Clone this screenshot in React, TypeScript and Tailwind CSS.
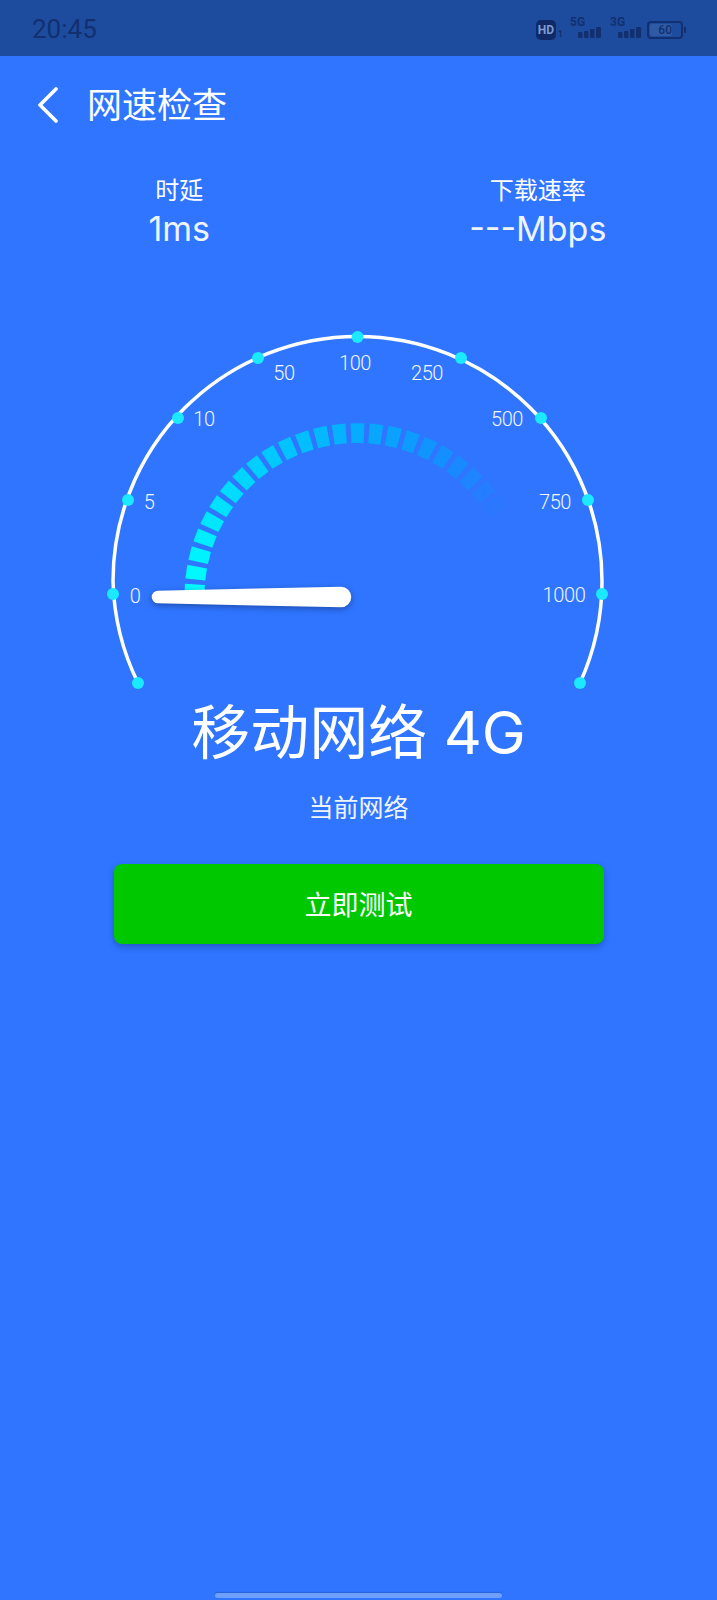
const FONT = "font-['Inter','Noto_Sans_CJK_SC',sans-serif]";

const DOTS = [
  [138, 683], [113, 594], [128, 500], [178, 418], [258, 358], [357.5, 337],
  [461, 358], [541, 418], [588, 500], [602, 594], [580, 683],
];

const LABELS: [string, number, number][] = [
  ["0", 135, 596], ["5", 149, 502], ["10", 204, 419], ["50", 284, 373], ["100", 355, 363],
  ["250", 427, 373], ["500", 507, 419], ["750", 555, 502], ["1000", 564, 595],
];

// segments start at the left end of the arc and fade out towards the right
function tickColor(angle: number) {
  const t = Math.min(1, angle / 150);
  const g = Math.round(255 - (255 - 117) * t);
  const r = Math.round(47 * Math.pow(t, 4));
  return `rgb(${r},${g},255)`;
}

function Gauge() {
  const cx = 357.5;
  const cy = 596;
  const ticks = [];
  for (let k = -14; k <= 9; k++) {
    const deg = 90 + k * 6.3;
    const rad = (deg * Math.PI) / 180;
    const half = 0.04;
    const pts = [
      [153, rad - half], [173, rad - half], [173, rad + half], [153, rad + half],
    ].map(([r, a]) => `${cx - r * Math.cos(a)},${cy - r * Math.sin(a)}`);
    ticks.push({ pts: pts.join(" "), color: tickColor(deg) });
  }
  return (
    <svg className="block w-full h-[400px]" viewBox="0 320 717 400" fill="none">
      {ticks.map((t, i) => (
        <polygon key={i} points={t.pts} fill={t.color} />
      ))}
      <path
        d="M138 683 A245 245 0 0 1 113 581 A244.5 244.5 0 0 1 602 581 A245 245 0 0 1 580 683"
        stroke="#ffffff"
        strokeWidth={3.5}
        strokeLinecap="round"
      />
      {DOTS.map(([x, y], i) => (
        <circle key={i} cx={x} cy={y} r={6} fill="#1be9ff" />
      ))}
      {LABELS.map(([s, x, y]) => (
        <text
          key={s}
          x={x}
          y={y + 7}
          textAnchor="middle"
          fontSize={20}
          fontWeight={300}
          letterSpacing={-0.4}
          fill="#f2f6ff"
          fontFamily="'Roboto', sans-serif"
        >
          {s}
        </text>
      ))}
      <path
        className="drop-shadow-[0_2px_3px_rgba(20,50,120,0.6)]"
        d="M158 590.7 L341 586.7 A10.3 10.3 0 0 1 341 607.3 L158 603.3 A6.3 6.3 0 0 1 158 590.7 Z"
        fill="#ffffff"
      />
    </svg>
  );
}

function Signal({ label }: { label: string }) {
  return (
    <svg width={32} height={24} viewBox="0 0 32 24" className="block -mt-[5px]">
      <text x={0} y={10} fontSize={12} fontWeight={700} fill="#12306f" fontFamily="'Roboto', sans-serif">
        {label}
      </text>
      <rect x={8} y={16} width={4.5} height={6} rx={1} fill="#12306f" />
      <rect x={14} y={15} width={4.5} height={7} rx={1} fill="#12306f" />
      <rect x={20} y={13} width={4.5} height={9} rx={1} fill="#12306f" />
      <rect x={26} y={11} width={5} height={11} rx={1} fill="#12306f" />
    </svg>
  );
}

export default function App() {
  return (
    <div className={`${FONT} w-[717px] min-h-[1600px] flex flex-col bg-[#2f75ff] text-white`}>
      <div className="h-14 shrink-0 bg-[#1d4c9f] flex items-center justify-between pl-8 pr-[31px]">
        <span className="font-['Roboto',sans-serif] text-[26px] text-[#12306f] pt-[3px]">20:45</span>
        <div className="flex items-center text-[#12306f] pt-1">
          <div className="w-5 h-5 rounded-[5px] bg-[#0f2a66] text-[#7f9bd0] text-[12px] font-bold leading-5 text-center font-['Roboto',sans-serif]">
            HD
          </div>
          <span className="font-['Roboto',sans-serif] text-[9px] font-bold self-end mb-[-1px] ml-[2px] mr-[7px]">1</span>
          <Signal label="5G" />
          <div className="w-[8px]" />
          <Signal label="3G" />
          <div className="ml-[5px] w-9 h-[18px] rounded-[4px] border-2 border-[#12306f] p-[1px]">
            <div className="w-[22px] h-full rounded-[2px] bg-[#2f5aa6] text-[12px] font-medium leading-[12px] text-[#12306f] text-right font-['Roboto',sans-serif]">
              60
            </div>
          </div>
          <div className="w-[2px] h-[6px] bg-[#12306f] ml-[1px]" />
        </div>
      </div>

      <div className="h-[98px] shrink-0 flex items-center pl-[37px]">
        <svg width={22} height={36} viewBox="0 0 22 36" fill="none">
          <path d="M19 2 L3 18 L19 34" stroke="#ffffff" strokeWidth={3.6} strokeLinecap="round" strokeLinejoin="round" />
        </svg>
        <div className="ml-[28px] text-[35px] leading-none">网速检查</div>
      </div>

      <div className="grid grid-cols-2 text-center">
        <div>
          <div className="text-[24px] leading-[30px] mt-[22px]">时延</div>
          <div className="text-[34px] leading-[45px] text-[#eef4ff]">1ms</div>
        </div>
        <div>
          <div className="text-[24px] leading-[30px] mt-[22px]">下载速率</div>
          <div className="text-[34px] leading-[45px] text-[#eef4ff]">---Mbps</div>
        </div>
      </div>

      <div className="mt-[69px]">
        <Gauge />
      </div>

      <div className="text-center text-[59px] leading-[80px] -mt-[27px]">移动网络 4G</div>
      <div className="text-center text-[25px] leading-[34px] mt-[18px] text-[#eef4ff]">当前网络</div>

      <button className="mt-[39px] mx-auto w-[490px] h-20 pt-1 rounded-lg bg-[#00c800] text-[27px] shadow-[0_3px_6px_rgba(20,50,120,0.4)]">
        立即测试
      </button>

      <div className="mt-auto mb-[2px] mx-auto w-[287px] h-[5px] rounded-full bg-[#6ea0ff] shadow-[0_-1px_1px_rgba(30,70,160,0.4)]" />
    </div>
  );
}
